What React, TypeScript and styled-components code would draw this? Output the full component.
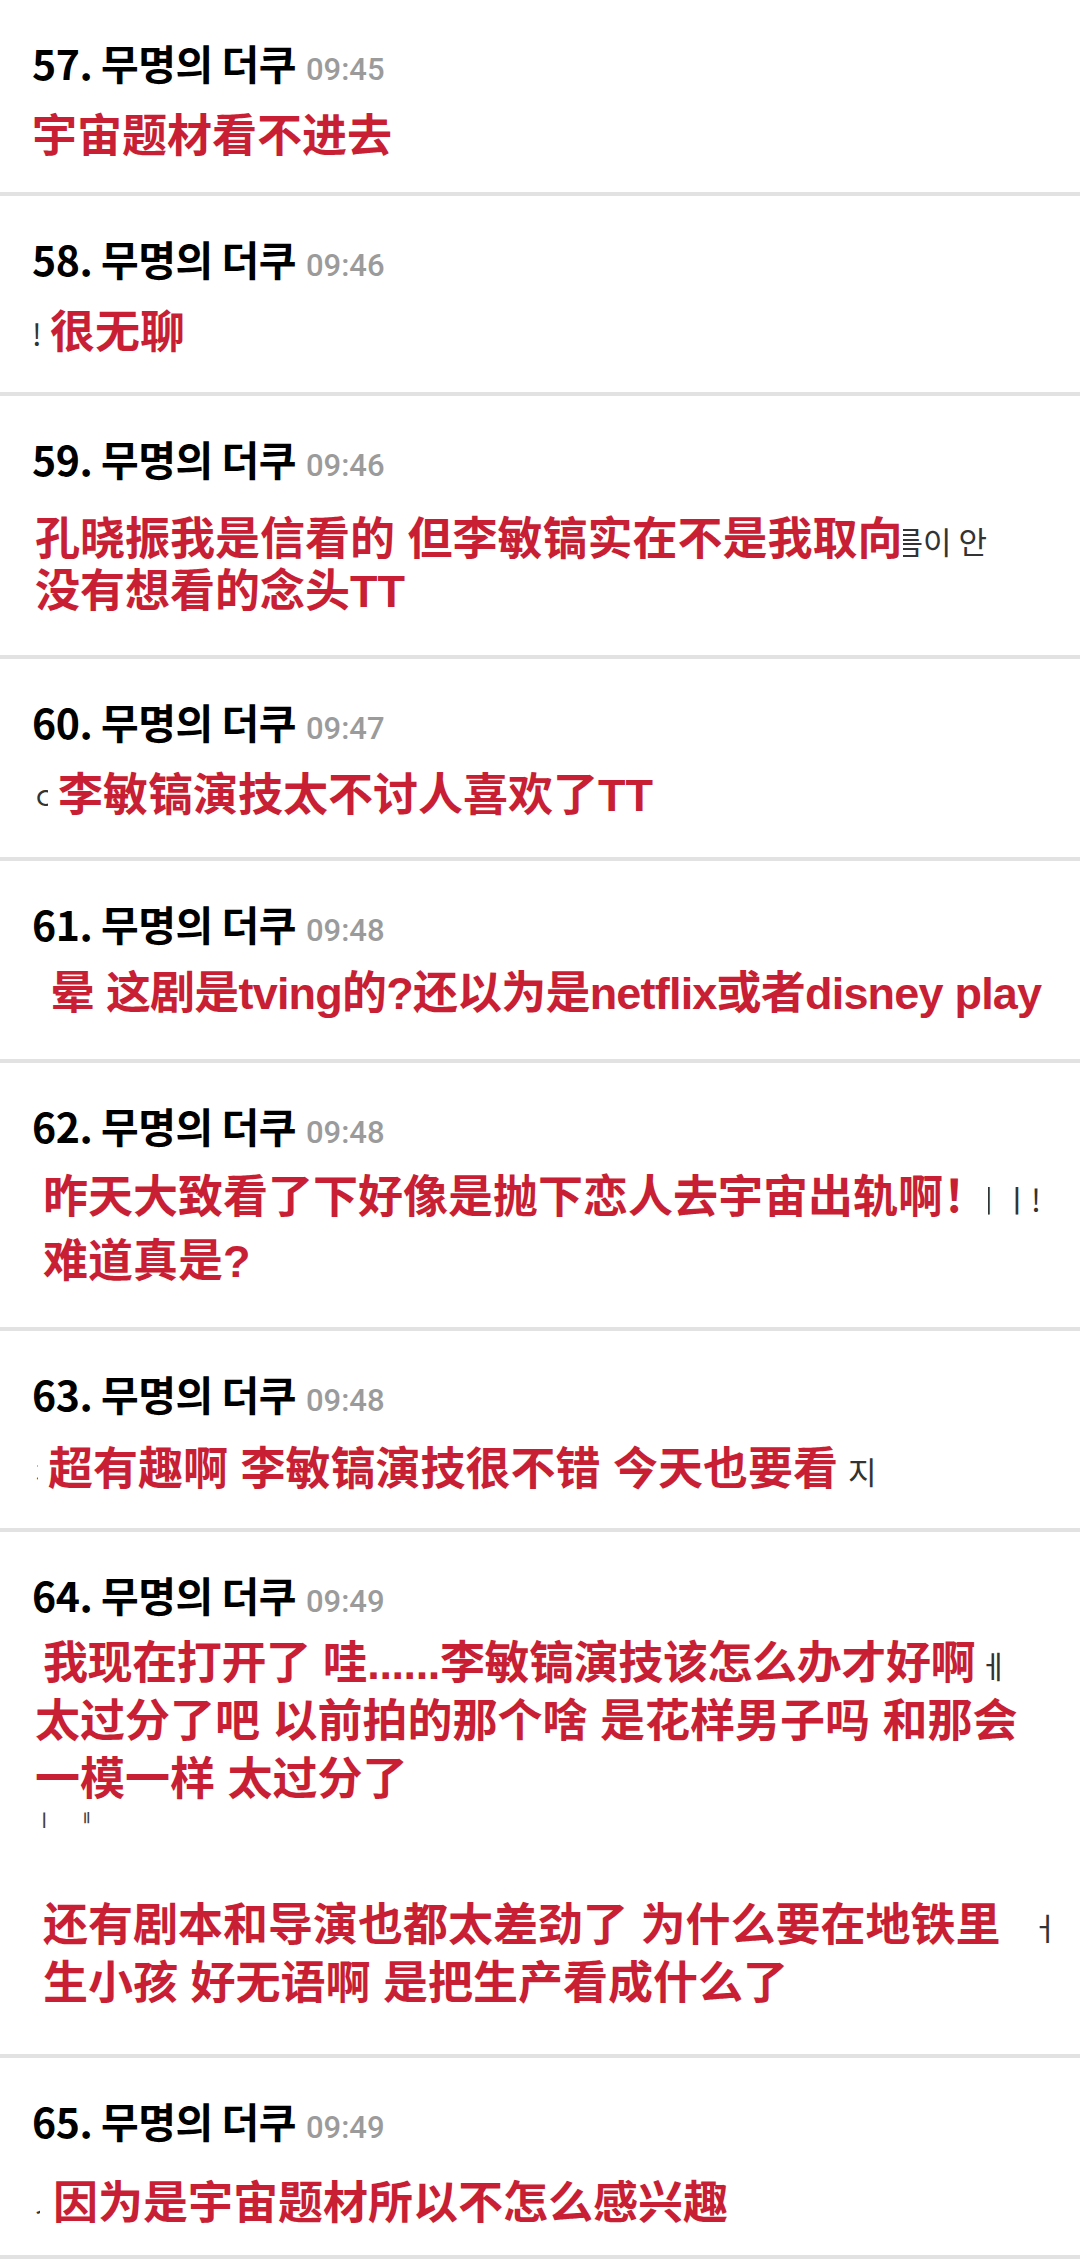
import React from "react";
import styled, { createGlobalStyle } from "styled-components";

const GlobalStyle = createGlobalStyle`
  html, body {
    margin: 0;
    padding: 0;
    background: #ffffff;
  }
  body {
    font-family: "Noto Sans CJK SC", "Noto Sans", sans-serif;
  }
`;

type LineData = {
  text?: string;
  indent?: number;
  ls?: number;
  lead?: string;
  leadW?: number;
  leadGap?: number;
  tail?: string;
  tailMl?: number;
  frag?: string;
  space?: number;
};

type ItemData = {
  no: number;
  time: string;
  gap: number;
  pb: number;
  lh?: number;
  lines: LineData[];
};

const items: ItemData[] = [
  { no: 57, time: "09:45", gap: 23, pb: 25, lines: [{ text: "宇宙题材看不进去" }] },
  {
    no: 58,
    time: "09:46",
    gap: 23,
    pb: 29,
    lines: [{ lead: "!", leadW: 10, leadGap: 8, text: "很无聊" }],
  },
  {
    no: 59,
    time: "09:46",
    gap: 34,
    pb: 37,
    lh: 52,
    lines: [
      { indent: 3, text: "孔晓振我是信看的 但李敏镐实在不是我取向", tail: "름이 안", tailMl: -8 },
      { indent: 3, text: "没有想看的念头TT" },
    ],
  },
  {
    no: 60,
    time: "09:47",
    gap: 23,
    pb: 31,
    lines: [{ lead: "ㅇ", leadW: 16, leadGap: 10, text: "李敏镐演技太不讨人喜欢了TT" }],
  },
  {
    no: 61,
    time: "09:48",
    gap: 19,
    pb: 35,
    lines: [
      {
        lead: "ㅣ",
        leadW: 8,
        leadGap: 10,
        ls: -0.8,
        text: "晕 这剧是tving的?还以为是netflix或者disney play",
      },
    ],
  },
  {
    no: 62,
    time: "09:48",
    gap: 19,
    pb: 33,
    lh: 64,
    lines: [
      { indent: 11, text: "昨天大致看了下好像是抛下恋人去宇宙出轨啊！", tail: "ㅣㅣ!", tailMl: -14 },
      { indent: 11, text: "难道真是?" },
    ],
  },
  {
    no: 63,
    time: "09:48",
    gap: 25,
    pb: 28,
    lines: [
      {
        lead: "ㅈ",
        leadW: 6,
        leadGap: 10,
        text: "超有趣啊 李敏镐演技很不错 今天也要看",
        tail: "지",
        tailMl: 10,
      },
    ],
  },
  {
    no: 64,
    time: "09:49",
    gap: 19,
    pb: 41,
    lh: 58,
    lines: [
      { indent: 11, ls: -0.4, text: "我现在打开了 哇......李敏镐演技该怎么办才好啊", tail: "ㅔ", tailMl: 4 },
      { indent: 3, text: "太过分了吧 以前拍的那个啥 是花样男子吗 和那会" },
      { indent: 3, text: "一模一样 太过分了" },
      { frag: "ㅣ ᅵᅵ" },
      { space: 69 },
      { indent: 11, text: "还有剧本和导演也都太差劲了 为什么要在地铁里", tail: "ㅓ", tailMl: 30 },
      { indent: 11, text: "生小孩 好无语啊 是把生产看成什么了" },
    ],
  },
  {
    no: 65,
    time: "09:49",
    gap: 32,
    pb: 21,
    lines: [{ lead: "ㅅ", leadW: 8, leadGap: 13, text: "因为是宇宙题材所以不怎么感兴趣" }],
  },
];

const List = styled.main`
  display: flex;
  flex-direction: column;
  width: 1080px;
`;

const Item = styled.article<{ $pb: number }>`
  display: flex;
  flex-direction: column;
  padding: 40px 32px ${(p) => p.$pb}px 32px;
  border-bottom: 4px solid #e2e2e2;
`;

const Header = styled.div`
  display: flex;
  align-items: baseline;
  height: 44px;
  line-height: 44px;
  white-space: nowrap;
`;

const Author = styled.span`
  font-family: "Noto Sans CJK KR", "Noto Sans", sans-serif;
  font-weight: 700;
  font-size: 41px;
  color: #000000;
  letter-spacing: -0.5px;
`;

const Time = styled.span`
  font-family: Roboto, "Noto Sans", sans-serif;
  font-weight: 500;
  font-size: 31px;
  color: #9b9b9b;
  margin-left: 10px;
`;

const Body = styled.div<{ $gap: number }>`
  display: flex;
  flex-direction: column;
  margin-top: ${(p) => p.$gap}px;
`;

const Line = styled.div<{ $lh: number; $indent: number }>`
  display: flex;
  align-items: center;
  height: ${(p) => p.$lh}px;
  padding-left: ${(p) => p.$indent}px;
  white-space: nowrap;
`;

const Lead = styled.span<{ $w: number; $gap: number }>`
  display: inline-block;
  width: ${(p) => p.$w}px;
  margin-right: ${(p) => p.$gap}px;
  overflow: hidden;
  font-family: "Noto Sans CJK KR", "Liberation Sans", sans-serif;
  font-weight: 400;
  font-size: 30px;
  line-height: 40px;
  color: #333333;
`;

const Red = styled.span<{ $ls: number }>`
  position: relative;
  z-index: 1;
  background: #ffffff;
  font-family: "Liberation Sans", "Noto Sans CJK SC", sans-serif;
  font-weight: 700;
  font-size: 45px;
  line-height: 1.2;
  letter-spacing: ${(p) => p.$ls}px;
  color: #c81f35;
`;

const Tail = styled.span<{ $ml: number }>`
  margin-left: ${(p) => p.$ml}px;
  font-family: "Noto Sans CJK KR", "Noto Sans", sans-serif;
  font-weight: 400;
  font-size: 31px;
  color: #333333;
`;

const Frag = styled.div`
  height: 19px;
  overflow: hidden;
  font-family: "Noto Sans CJK KR", sans-serif;
  font-size: 22px;
  line-height: 22px;
  color: #444444;
  padding-left: 2px;
  letter-spacing: 6px;
`;

const Spacer = styled.div<{ $h: number }>`
  height: ${(p) => p.$h}px;
`;

function Comment({ item }: { item: ItemData }) {
  const lh = item.lh ?? 60;
  return (
    <Item $pb={item.pb}>
      <Header>
        <Author>{item.no}. 무명의 더쿠</Author>
        <Time>{item.time}</Time>
      </Header>
      <Body $gap={item.gap}>
        {item.lines.map((l, i) => {
          if (l.space) return <Spacer key={i} $h={l.space} />;
          if (l.frag) return <Frag key={i}>{l.frag}</Frag>;
          return (
            <Line key={i} $lh={lh} $indent={l.indent ?? 0}>
              {l.lead && (
                <Lead $w={l.leadW ?? 8} $gap={l.leadGap ?? 8}>
                  {l.lead}
                </Lead>
              )}
              <Red $ls={l.ls ?? 0}>{l.text}</Red>
              {l.tail && <Tail $ml={l.tailMl ?? 0}>{l.tail}</Tail>}
            </Line>
          );
        })}
      </Body>
    </Item>
  );
}

export default function App() {
  return (
    <>
      <GlobalStyle />
      <List>
        {items.map((it) => (
          <Comment key={it.no} item={it} />
        ))}
      </List>
    </>
  );
}
